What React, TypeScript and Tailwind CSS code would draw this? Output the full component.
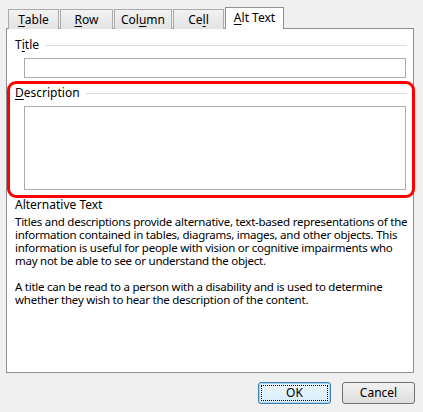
import React from "react";

const font = { fontFamily: '"Noto Sans", "Open Sans", sans-serif' };

function Acc({ children }: { children: React.ReactNode }) {
  return <span className="underline underline-offset-[2px] decoration-[1px]">{children}</span>;
}

function Tab({ w, children }: { w: string; children: React.ReactNode }) {
  return <div className={`${w} h-[20px] mr-px flex items-center justify-center border border-b-0 border-[#acacac] bg-gradient-to-b from-[#f2f2f2] to-[#e3e3e3]`}>{children}</div>;
}

function GroupLabel({ children }: { children: React.ReactNode }) {
  return <div className="flex items-center h-[16px]">
    <span>{children}</span>
    <div className="flex-1 h-px bg-[#d5dfe5] ml-[6px]" />
  </div>;
}

export default function App() {
  return <div className="relative w-[423px] h-[412px] bg-[#f0f0f0] text-[12px] text-black overflow-hidden" style={font}>
    <div className="flex items-end h-[29px] pl-[8px]">
      <Tab w="w-[51px]"><Acc>T</Acc>able</Tab>
      <Tab w="w-[53px]"><Acc>R</Acc>ow</Tab>
      <Tab w="w-[58px]">Col<Acc>u</Acc>mn</Tab>
      <Tab w="w-[51px]">Ce<Acc>l</Acc>l</Tab>
      <div className="w-[59px] h-[22px] relative z-10 flex items-center justify-center border border-b-0 border-[#8f8f96] bg-white pb-[2px]"><Acc>A</Acc>lt Text</div>
    </div>
    <div className="-mt-px ml-[6px] w-[408px] h-[345px] border border-[#8f8f96] bg-white pl-[8px] pr-[6px] pt-[8px]">
      <GroupLabel>T<Acc>i</Acc>tle</GroupLabel>
      <div className="mt-[5px] ml-[9px] mr-[1px] h-[20px] border border-[#abadb3] bg-white" />
      <div className="mt-[7px]">
        <GroupLabel><Acc>D</Acc>escription</GroupLabel>
      </div>
      <div className="mt-[5px] ml-[9px] mr-[1px] h-[84px] border border-[#abadb3] bg-white" />
      <div className="mt-[7px] h-[16px] leading-[16px]">Alternative Text</div>
      <div className="mt-[2px] text-[11.5px] leading-[13px] whitespace-nowrap tracking-[-0.25px]">
        <div>Titles and descriptions provide alternative, text-based representations of the</div>
        <div>information contained in tables, diagrams, images, and other objects. This</div>
        <div>information is useful for people with vision or cognitive impairments who</div>
        <div>may not be able to see or understand the object.</div>
        <div className="h-[13px]" />
        <div>A title can be read to a person with a disability and is used to determine</div>
        <div>whether they wish to hear the description of the content.</div>
      </div>
    </div>
    <div className="flex justify-end gap-[11px] mt-[9px] pr-[8px]">
      <div className="w-[73px] h-[22px] rounded-[3px] border border-[#3c7fb1] bg-gradient-to-b from-[#eaf6fd] to-[#d9eefa] p-[2px] shadow-[inset_0_0_0_1px_#a6d8f4]">
        <div className="h-full flex items-center justify-center border border-dotted border-black">OK</div>
      </div>
      <div className="w-[73px] h-[22px] rounded-[3px] border border-[#707070] bg-gradient-to-b from-[#f2f2f2] to-[#dddddd] flex items-center justify-center">Cancel</div>
    </div>
    <div className="absolute left-[7px] top-[81px] w-[408px] h-[117px] rounded-[9px] border-[3px] border-[#ff0000]" />
  </div>;
}
